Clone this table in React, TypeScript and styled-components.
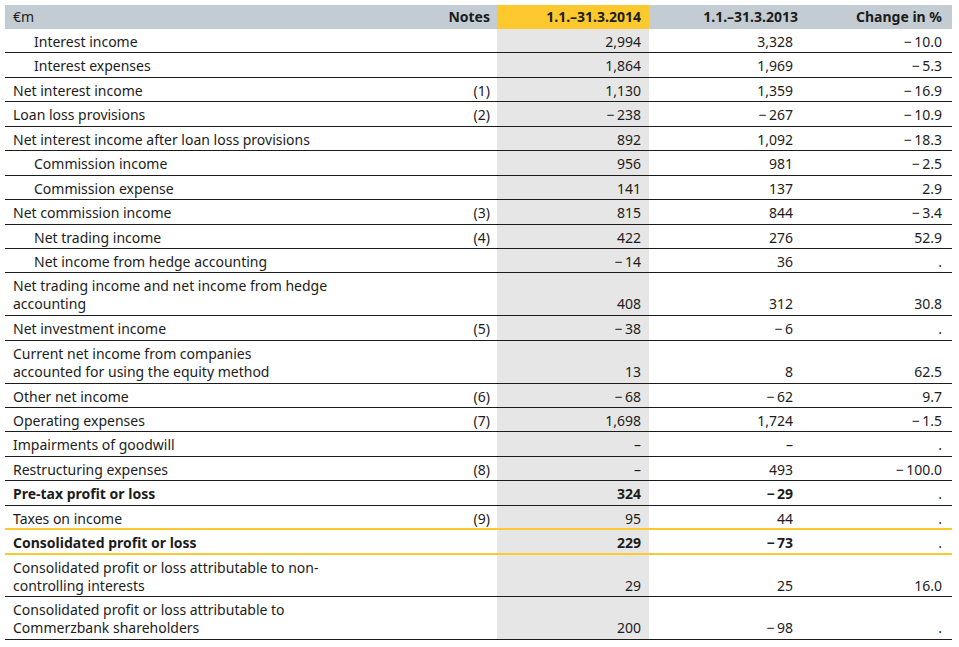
import React from "react";
import styled, { createGlobalStyle } from "styled-components";

const GlobalStyle = createGlobalStyle`
  html, body {
    margin: 0;
    padding: 0;
    background: #ffffff;
  }
  body {
    font-family: "Noto Sans", "Open Sans", Arial, sans-serif;
    color: #1c1c1c;
  }
`;

const Page = styled.div`
  padding: 5px 7px 5px 5px;
`;

const Table = styled.table`
  width: 947px;
  border-collapse: collapse;
  table-layout: fixed;
  font-family: "Noto Sans", "Open Sans", Arial, sans-serif;
  font-size: 14px;
  line-height: 18px;
  color: #1c1c1c;
`;

const HeadRow = styled.tr`
  background: #c3ccd2;
`;

const HeadCell = styled.th<{ $align?: "left" | "right"; $current?: boolean; $pr?: number; $bold?: boolean }>`
  text-align: ${(p) => p.$align ?? "right"};
  font-weight: ${(p) => (p.$bold === false ? 400 : 700)};
  padding: 3px ${(p) => p.$pr ?? 8}px 3px 8px;
  background: ${(p) => (p.$current ? "#fec92e" : "transparent")};
  white-space: nowrap;
`;

type Rule = "black" | "yellow";

const BodyRow = styled.tr<{ $rule: Rule; $pb: number }>`
  & > td {
    border-bottom: ${(p) => (p.$rule === "yellow" ? "2px solid #fec92e" : "1px solid #1c1c1c")};
    padding-bottom: ${(p) => p.$pb}px;
  }
`;

const LabelCell = styled.td<{ $indent?: boolean; $bold?: boolean }>`
  text-align: left;
  vertical-align: bottom;
  padding-top: 4px;
  padding-right: 8px;
  padding-left: ${(p) => (p.$indent ? 29 : 8)}px;
  font-weight: ${(p) => (p.$bold ? 700 : 400)};
  white-space: nowrap;
`;

const NumCell = styled.td<{ $current?: boolean; $bold?: boolean; $pr?: number }>`
  text-align: right;
  vertical-align: bottom;
  padding-top: 4px;
  padding-right: ${(p) => p.$pr ?? 8}px;
  padding-left: 8px;
  font-weight: ${(p) => (p.$bold ? 700 : 400)};
  background: ${(p) => (p.$current ? "#e6e6e6" : "transparent")};
  white-space: nowrap;
`;

type Row = {
  label: string[];
  indent?: boolean;
  bold?: boolean;
  note?: string;
  cur: string;
  prev: string;
  change: string;
  rule?: Rule;
};

const M = "−\u2009";

const rows: Row[] = [
  { label: ["Interest income"], indent: true, cur: "2,994", prev: "3,328", change: `${M}10.0` },
  { label: ["Interest expenses"], indent: true, cur: "1,864", prev: "1,969", change: `${M}5.3` },
  { label: ["Net interest income"], note: "(1)", cur: "1,130", prev: "1,359", change: `${M}16.9` },
  { label: ["Loan loss provisions"], note: "(2)", cur: `${M}238`, prev: `${M}267`, change: `${M}10.9` },
  { label: ["Net interest income after loan loss provisions"], cur: "892", prev: "1,092", change: `${M}18.3` },
  { label: ["Commission income"], indent: true, cur: "956", prev: "981", change: `${M}2.5` },
  { label: ["Commission expense"], indent: true, cur: "141", prev: "137", change: "2.9" },
  { label: ["Net commission income"], note: "(3)", cur: "815", prev: "844", change: `${M}3.4` },
  { label: ["Net trading income"], indent: true, note: "(4)", cur: "422", prev: "276", change: "52.9" },
  { label: ["Net income from hedge accounting"], indent: true, cur: `${M}14`, prev: "36", change: "." },
  {
    label: ["Net trading income and net income from hedge", "accounting"],
    cur: "408",
    prev: "312",
    change: "30.8",
  },
  { label: ["Net investment income"], note: "(5)", cur: `${M}38`, prev: `${M}6`, change: "." },
  {
    label: ["Current net income from companies", "accounted for using the equity method"],
    cur: "13",
    prev: "8",
    change: "62.5",
  },
  { label: ["Other net income"], note: "(6)", cur: `${M}68`, prev: `${M}62`, change: "9.7" },
  { label: ["Operating expenses"], note: "(7)", cur: "1,698", prev: "1,724", change: `${M}1.5` },
  { label: ["Impairments of goodwill"], cur: "–", prev: "–", change: "." },
  { label: ["Restructuring expenses"], note: "(8)", cur: "–", prev: "493", change: `${M}100.0` },
  { label: ["Pre-tax profit or loss"], bold: true, cur: "324", prev: `${M}29`, change: "." },
  { label: ["Taxes on income"], note: "(9)", cur: "95", prev: "44", change: ".", rule: "yellow" },
  { label: ["Consolidated profit or loss"], bold: true, cur: "229", prev: `${M}73`, change: ".", rule: "yellow" },
  {
    label: ["Consolidated profit or loss attributable to non-", "controlling interests"],
    cur: "29",
    prev: "25",
    change: "16.0",
  },
  {
    label: ["Consolidated profit or loss attributable to", "Commerzbank shareholders"],
    cur: "200",
    prev: `${M}98`,
    change: ".",
  },
];

// Rows in the reference are 24.45px (one line) and 42.8px (two lines) on average;
// distribute whole pixels so that the rules land where they do in the print layout.
const TOP = 29;
const paddings: number[] = (() => {
  let cum = TOP;
  return rows.map((r) => {
    const lines = r.label.length;
    const nominal = lines === 1 ? 24.45 : 42.8;
    const prevBottom = Math.round(cum);
    cum += nominal;
    const h = Math.round(cum) - prevBottom;
    const border = r.rule === "yellow" ? 2 : 1;
    return Math.max(0, h - border - 18 * lines - 4);
  });
})();

export default function App() {
  return (
    <Page>
      <GlobalStyle />
      <Table>
        <colgroup>
          <col style={{ width: 412 }} />
          <col style={{ width: 80 }} />
          <col style={{ width: 152 }} />
          <col style={{ width: 152 }} />
          <col style={{ width: 151 }} />
        </colgroup>
        <thead>
          <HeadRow>
            <HeadCell $align="left" $bold={false}>
              €m
            </HeadCell>
            <HeadCell $pr={7}>Notes</HeadCell>
            <HeadCell $current $pr={8}>
              1.1.–31.3.2014
            </HeadCell>
            <HeadCell $pr={3}>1.1.–31.3.2013</HeadCell>
            <HeadCell $pr={10}>Change in %</HeadCell>
          </HeadRow>
        </thead>
        <tbody>
          {rows.map((r, i) => (
            <BodyRow key={i} $rule={r.rule ?? "black"} $pb={paddings[i]}>
              <LabelCell $indent={r.indent} $bold={r.bold}>
                {r.label.map((line, j) => (
                  <React.Fragment key={j}>
                    {j > 0 && <br />}
                    {line}
                  </React.Fragment>
                ))}
              </LabelCell>
              <NumCell $pr={7}>{r.note ?? ""}</NumCell>
              <NumCell $current $bold={r.bold} $pr={8}>
                {r.cur}
              </NumCell>
              <NumCell $bold={r.bold} $pr={8}>
                {r.prev}
              </NumCell>
              <NumCell $pr={10}>{r.change}</NumCell>
            </BodyRow>
          ))}
        </tbody>
      </Table>
    </Page>
  );
}
